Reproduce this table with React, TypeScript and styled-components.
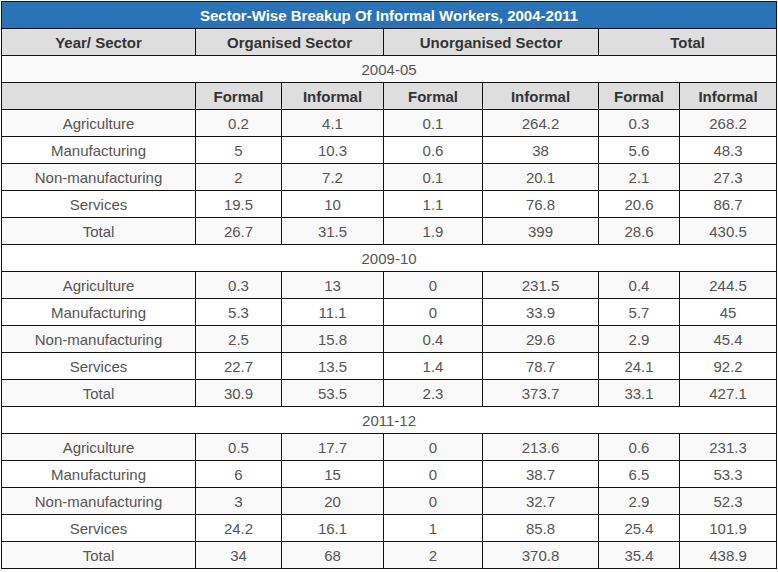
import React from 'react';
import styled, { createGlobalStyle } from 'styled-components';

const GlobalStyle = createGlobalStyle`
  html, body {
    margin: 0;
    padding: 0;
    background: #ffffff;
  }
`;

const Page = styled.div`
  padding: 1px 0 0 1px;
  font-family: 'Liberation Sans', Arial, sans-serif;
`;

const Table = styled.table`
  border-collapse: collapse;
  table-layout: fixed;
  width: 776px;
  border: 1px solid #111111;
  font-size: 15px;
`;

// odd rows (counting from the title) get the light zebra shade
const Row = styled.tr<{ $striped?: boolean }>`
  height: 26px;
  background: ${({ $striped }) => ($striped ? '#f9f9f9' : '#ffffff')};
`;

const TitleCell = styled.th`
  background: #2b73b7;
  color: #ffffff;
  font-weight: bold;
  text-align: center;
  padding: 0;
  border: 1px solid #111111;
  height: 26px;
`;

const HeadCell = styled.th`
  background: #dedede;
  color: #333333;
  font-weight: bold;
  text-align: center;
  padding: 0;
  border: 1px solid #111111;
  height: 26px;
`;

const Cell = styled.td`
  color: #555555;
  text-align: center;
  padding: 0;
  border: 1px solid #111111;
  height: 26px;
`;

type Line = [string, string, string, string, string, string, string];

type Block = {
  year: string;
  rows: Line[];
};

const blocks: Block[] = [
  {
    year: '2004-05',
    rows: [
      ['Agriculture', '0.2', '4.1', '0.1', '264.2', '0.3', '268.2'],
      ['Manufacturing', '5', '10.3', '0.6', '38', '5.6', '48.3'],
      ['Non-manufacturing', '2', '7.2', '0.1', '20.1', '2.1', '27.3'],
      ['Services', '19.5', '10', '1.1', '76.8', '20.6', '86.7'],
      ['Total', '26.7', '31.5', '1.9', '399', '28.6', '430.5'],
    ],
  },
  {
    year: '2009-10',
    rows: [
      ['Agriculture', '0.3', '13', '0', '231.5', '0.4', '244.5'],
      ['Manufacturing', '5.3', '11.1', '0', '33.9', '5.7', '45'],
      ['Non-manufacturing', '2.5', '15.8', '0.4', '29.6', '2.9', '45.4'],
      ['Services', '22.7', '13.5', '1.4', '78.7', '24.1', '92.2'],
      ['Total', '30.9', '53.5', '2.3', '373.7', '33.1', '427.1'],
    ],
  },
  {
    year: '2011-12',
    rows: [
      ['Agriculture', '0.5', '17.7', '0', '213.6', '0.6', '231.3'],
      ['Manufacturing', '6', '15', '0', '38.7', '6.5', '53.3'],
      ['Non-manufacturing', '3', '20', '0', '32.7', '2.9', '52.3'],
      ['Services', '24.2', '16.1', '1', '85.8', '25.4', '101.9'],
      ['Total', '34', '68', '2', '370.8', '35.4', '438.9'],
    ],
  },
];

const colWidths = [194, 86, 102, 99, 116, 81, 97];
const subHeads = ['Formal', 'Informal', 'Formal', 'Informal', 'Formal', 'Informal'];

const App: React.FC = () => {
  // title = row 1, header = row 2, so the first year row is row 3
  let rowNo = 2;
  const next = () => {
    rowNo += 1;
    return rowNo % 2 === 1;
  };

  return (
    <Page>
      <GlobalStyle />
      <Table>
        <colgroup>
          {colWidths.map((w, i) => (
            <col key={i} style={{ width: `${w}px` }} />
          ))}
        </colgroup>
        <tbody>
          <Row>
            <TitleCell colSpan={7}>Sector-Wise Breakup Of Informal Workers, 2004-2011</TitleCell>
          </Row>
          <Row>
            <HeadCell>Year/ Sector</HeadCell>
            <HeadCell colSpan={2}>Organised Sector</HeadCell>
            <HeadCell colSpan={2}>Unorganised Sector</HeadCell>
            <HeadCell colSpan={2}>Total</HeadCell>
          </Row>
          {blocks.map((block, b) => (
            <React.Fragment key={block.year}>
              <Row $striped={next()}>
                <Cell colSpan={7}>{block.year}</Cell>
              </Row>
              {b === 0 && (
                <Row $striped={next()}>
                  <HeadCell />
                  {subHeads.map((h, i) => (
                    <HeadCell key={i}>{h}</HeadCell>
                  ))}
                </Row>
              )}
              {block.rows.map((r) => (
                <Row key={r[0]} $striped={next()}>
                  {r.map((v, i) => (
                    <Cell key={i}>{v}</Cell>
                  ))}
                </Row>
              ))}
            </React.Fragment>
          ))}
        </tbody>
      </Table>
    </Page>
  );
};

export default App;
